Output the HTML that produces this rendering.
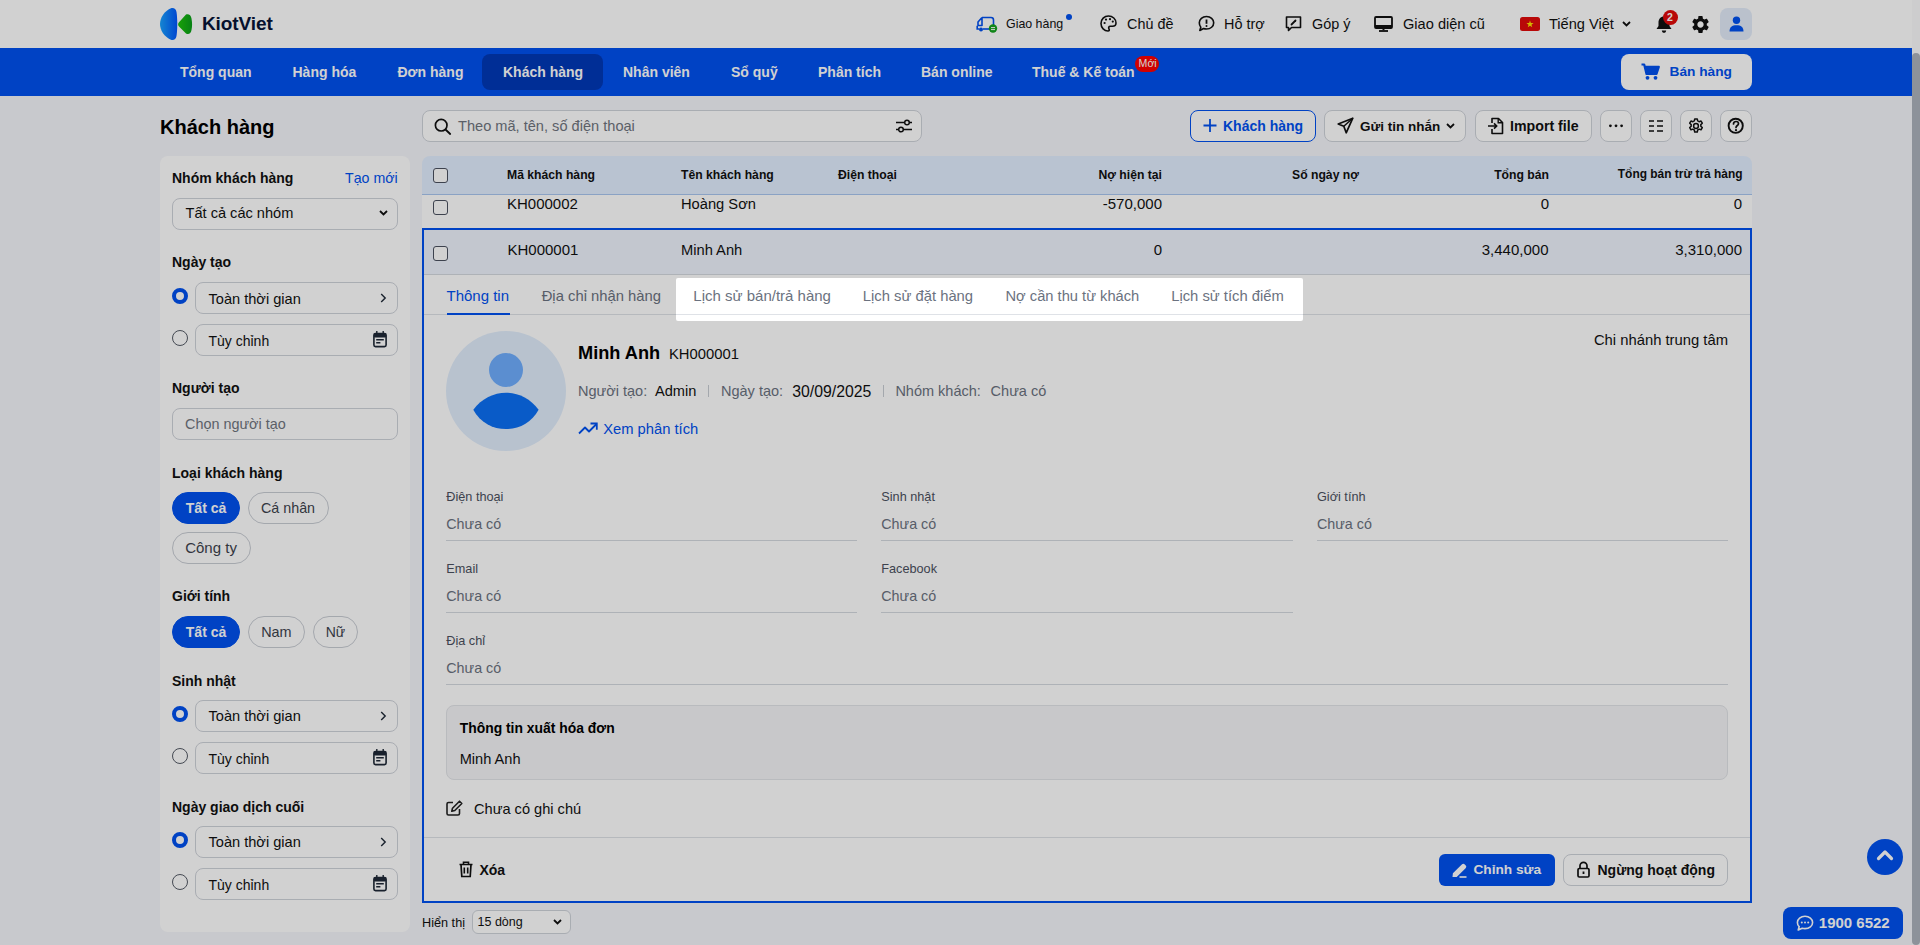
<!DOCTYPE html>
<html lang="vi">
<head>
<meta charset="utf-8">
<title>KiotViet - Khách hàng</title>
<style>
*{box-sizing:border-box;margin:0;padding:0}
html,body{width:1920px;height:945px;overflow:hidden}
body{font-family:"Liberation Sans",sans-serif;background:#f5f6fa;color:#111;position:relative}
.a{position:absolute}
.t{position:absolute;white-space:nowrap;line-height:1}
.b{font-weight:700}
svg{position:absolute;overflow:visible}
#hdr{left:0;top:0;width:1912px;height:48px;background:#fff}
#nav{left:0;top:48px;width:1912px;height:48px;background:#0051f0}
.nv{color:#fff;font-size:14px;font-weight:700;top:65px}
.box{position:absolute;background:#fff;border:1px solid #d4d7dd;border-radius:6px}
.btn{position:absolute;background:#fff;border:1px solid #cfd3da;border-radius:8px}
.lbl{font-size:14px;font-weight:700;color:#111}
.inp{position:absolute;left:195px;width:203px;height:32px;background:#fff;border:1px solid #cfd3da;border-radius:8px}
.radio{position:absolute;left:172px;width:16px;height:16px;border-radius:50%;border:1px solid #555b66;background:#fff}
.radio.on{border:4px solid #0051f0}
.pill{position:absolute;height:32px;border-radius:16px;border:1px solid #c9cdd4;background:#fff}
.pill.on{background:#0051f0;border-color:#0051f0}
.chk{width:15px;height:15px;border:1.5px solid #4b5160;border-radius:3px;background:#fff}
.th{top:169.1px;font-size:12.2px;font-weight:700;color:#111}
.td{font-size:15px;color:#111}
.tab{top:288.5px;color:#6b7280}
.mg{top:384.1px;font-size:14.5px;color:#6b7280}
.mv{top:384.1px;font-size:14.6px;color:#111}
.fl{font-size:12.7px;color:#4b5160}
.fv{font-size:14.3px;color:#6b7280}
.fline{height:1px;background:#d5d9e0}
</style>
</head>
<body>
<!-- HEADER -->
<div id="hdr" class="a">
  <svg style="left:160px;top:7px" width="34" height="34" viewBox="0 0 34 34">
    <defs>
      <linearGradient id="lg1" x1="0" y1="0" x2="1" y2="0"><stop offset="0" stop-color="#1aa3ff"/><stop offset="1" stop-color="#0057ff"/></linearGradient>
      <linearGradient id="lg2" x1="0" y1="0" x2="1" y2="0"><stop offset="0" stop-color="#1ec40a"/><stop offset="1" stop-color="#0a9e1a"/></linearGradient>
    </defs>
    <path d="M11.5 1 C14 0.5 16 2 16.5 5 C17.5 12 17.5 22 16.5 29 C16 32 14 33.5 11.5 33 C4 30 0 23 0 17 C0 11 4 4 11.5 1 Z" fill="url(#lg1)"/>
    <path d="M26 7.5 C28.5 6.5 31 8 31.5 11.5 C32.3 16 32.3 19 31.5 23 C31 26.5 28.5 28 26 26.5 L19 19.5 C17.8 18.3 17.8 16.5 19 15.3 Z" fill="url(#lg2)"/>
  </svg>
  <div class="t b" style="left:202px;top:14px;font-size:19px;color:#071437;letter-spacing:-0.1px">KiotViet</div>

  <!-- truck -->
  <svg style="left:976px;top:15px" width="22" height="18" viewBox="0 0 22 18">
    <path d="M6 2.5 h9 a2.5 2.5 0 0 1 2.5 2.5 v5" fill="none" stroke="#0051f0" stroke-width="1.6"/>
    <path d="M6 2.5 v8 h-4 v-3.5 l4 -4.5" fill="none" stroke="#0051f0" stroke-width="1.6" stroke-linejoin="round"/>
    <path d="M1.2 10.8 v3.2 h2" fill="none" stroke="#0051f0" stroke-width="1.6"/>
    <path d="M7 14 h6" fill="none" stroke="#0051f0" stroke-width="1.6"/>
    <circle cx="5" cy="14.5" r="2" fill="#0051f0"/>
    <circle cx="17" cy="13.5" r="4.2" fill="#14a31e"/>
    <path d="M15 12.6 h4 M15 14.6 h4" stroke="#fff" stroke-width="1"/>
  </svg>
  <div class="t" style="left:1006px;top:17.5px;font-size:12.4px;color:#111">Giao hàng</div>
  <div class="a" style="left:1066px;top:14px;width:6px;height:6px;border-radius:50%;background:#0051f0"></div>

  <!-- palette -->
  <svg style="left:1100px;top:15px" width="17" height="17" viewBox="0 0 17 17">
    <path d="M8.5 1 C4.3 1 1 4.3 1 8.5 C1 12.7 4.3 16 8 16 C9.3 16 9.6 15 9 14 C8.2 12.8 8.8 11.3 10.3 11.3 H12.5 C14.6 11.3 16 9.8 16 8 C16 4 12.6 1 8.5 1 Z" fill="none" stroke="#111" stroke-width="1.6"/>
    <circle cx="4.6" cy="8" r="1.1" fill="#111"/><circle cx="6" cy="4.6" r="1.1" fill="#111"/><circle cx="10" cy="4.2" r="1.1" fill="#111"/><circle cx="12.8" cy="6.6" r="1.1" fill="#111"/>
  </svg>
  <div class="t" style="left:1127px;top:16.7px;font-size:14.4px">Chủ đề</div>

  <!-- help bubble -->
  <svg style="left:1198px;top:15px" width="17" height="17" viewBox="0 0 17 17">
    <path d="M8.5 1.5 C12.6 1.5 15.7 4.2 15.7 7.8 C15.7 11.4 12.6 14 8.5 14 C7.5 14 6.5 13.9 5.6 13.5 L1.8 15.5 L2.8 12.2 C1.8 11 1.3 9.5 1.3 7.8 C1.3 4.2 4.4 1.5 8.5 1.5 Z" fill="none" stroke="#111" stroke-width="1.6" stroke-linejoin="round"/>
    <path d="M8.5 4.5 v4.3" stroke="#111" stroke-width="1.8"/><circle cx="8.5" cy="10.9" r="1" fill="#111"/>
  </svg>
  <div class="t" style="left:1224px;top:16.7px;font-size:14.4px">Hỗ trợ</div>

  <!-- feedback -->
  <svg style="left:1285px;top:16px" width="17" height="16" viewBox="0 0 17 16">
    <path d="M1.5 1 H15.5 V11.5 H6.5 L3.5 14.5 V11.5 H1.5 Z" fill="none" stroke="#111" stroke-width="1.6" stroke-linejoin="round"/>
    <path d="M6.5 8.5 L10.5 4.5" stroke="#111" stroke-width="1.8" stroke-linecap="round"/>
  </svg>
  <div class="t" style="left:1312px;top:16.7px;font-size:14.4px">Góp ý</div>

  <!-- monitor -->
  <svg style="left:1374px;top:16px" width="19" height="16" viewBox="0 0 19 16">
    <rect x="1" y="1" width="17" height="11" rx="1" fill="none" stroke="#111" stroke-width="1.8"/>
    <rect x="1" y="9" width="17" height="3" fill="#111"/>
    <path d="M9.5 12 v2" stroke="#111" stroke-width="2"/><path d="M5 15 h9" stroke="#111" stroke-width="1.8"/>
  </svg>
  <div class="t" style="left:1403px;top:16.7px;font-size:14.6px">Giao diện cũ</div>

  <!-- flag -->
  <div class="a" style="left:1520px;top:17px;width:20px;height:14px;border-radius:2.5px;background:#e10a0a"></div>
  <svg style="left:1526px;top:20px" width="8" height="8" viewBox="0 0 10 10"><path d="M5 0.5 L6.1 3.7 L9.5 3.7 L6.8 5.8 L7.8 9.2 L5 7.1 L2.2 9.2 L3.2 5.8 L0.5 3.7 L3.9 3.7 Z" fill="#ffe100"/></svg>
  <div class="t" style="left:1549px;top:16.7px;font-size:14.6px">Tiếng Việt</div>
  <svg style="left:1622px;top:21px" width="9" height="6" viewBox="0 0 9 6"><path d="M1 1 L4.5 4.5 L8 1" fill="none" stroke="#111" stroke-width="1.8"/></svg>

  <!-- bell -->
  <svg style="left:1655px;top:15px" width="18" height="19" viewBox="0 0 18 19">
    <path d="M9 1.5 C5.5 1.5 3.5 4.2 3.5 7.5 V11 L1.5 14 H16.5 L14.5 11 V7.5 C14.5 4.2 12.5 1.5 9 1.5 Z" fill="#111"/>
    <path d="M6.8 15.5 C7 17 7.8 17.8 9 17.8 C10.2 17.8 11 17 11.2 15.5 Z" fill="#111"/>
  </svg>
  <div class="a" style="left:1662.5px;top:9.5px;width:15px;height:15px;border-radius:50%;background:#e10a0a"></div>
  <div class="t b" style="left:1667px;top:12.3px;font-size:10.5px;color:#fff">2</div>

  <!-- gear -->
  <svg style="left:1689.6px;top:13.5px" width="21" height="21" viewBox="0 0 24 24">
    <path fill="#111" d="M19.14 12.94c.04-.3.06-.61.06-.94 0-.32-.02-.64-.07-.94l2.03-1.58a.49.49 0 0 0 .12-.61l-1.92-3.32a.488.488 0 0 0-.59-.22l-2.39.96c-.5-.38-1.03-.7-1.62-.94l-.36-2.54a.484.484 0 0 0-.48-.41h-3.84c-.24 0-.43.17-.47.41l-.36 2.54c-.59.24-1.13.57-1.62.94l-2.39-.96c-.22-.08-.47 0-.59.22L2.74 8.87c-.12.21-.08.47.12.61l2.03 1.58c-.05.3-.09.63-.09.94s.02.64.07.94l-2.03 1.58a.49.49 0 0 0-.12.61l1.92 3.32c.12.22.37.29.59.22l2.39-.96c.5.38 1.03.7 1.62.94l.36 2.54c.05.24.24.41.48.41h3.84c.24 0 .44-.17.47-.41l.36-2.54c.59-.24 1.13-.56 1.62-.94l2.39.96c.22.08.47 0 .59-.22l1.92-3.32c.12-.22.07-.47-.12-.61l-2.01-1.58zM12 15.6c-1.98 0-3.6-1.62-3.6-3.6s1.62-3.6 3.6-3.6 3.6 1.62 3.6 3.6-1.62 3.6-3.6 3.6z"/>
  </svg>

  <!-- avatar -->
  <div class="a" style="left:1720px;top:8px;width:32px;height:32px;border-radius:8px;background:#e3ecf9"></div>
  <svg style="left:1729px;top:16px" width="15" height="16" viewBox="0 0 15 16">
    <circle cx="7.5" cy="4.2" r="3.7" fill="#0051f0"/>
    <path d="M0.5 15.5 C0.5 11 3 9.2 7.5 9.2 C12 9.2 14.5 11 14.5 15.5 Z" fill="#0051f0"/>
  </svg>
</div>

<!-- NAV -->
<div id="nav" class="a"></div>
<div class="a" style="left:482px;top:54px;width:121px;height:36px;border-radius:8px;background:#0039b8"></div>
<div class="t nv" style="left:180px">Tổng quan</div>
<div class="t nv" style="left:292.5px">Hàng hóa</div>
<div class="t nv" style="left:397.5px">Đơn hàng</div>
<div class="t nv" style="left:503px">Khách hàng</div>
<div class="t nv" style="left:623px">Nhân viên</div>
<div class="t nv" style="left:731px">Sổ quỹ</div>
<div class="t nv" style="left:818px">Phân tích</div>
<div class="t nv" style="left:921px">Bán online</div>
<div class="t nv" style="left:1032px">Thuế &amp; Kế toán</div>
<div class="a" style="left:1135px;top:56px;width:24px;height:16px;border-radius:8px;background:#ff0000"></div>
<div class="t" style="left:1138.6px;top:57.9px;font-size:10.6px;color:#fff">Mới</div>

<div class="a" style="left:1621px;top:54px;width:131px;height:36px;border-radius:8px;background:#fff"></div>
<svg style="left:1641px;top:63px" width="19" height="17" viewBox="0 0 19 17">
  <path d="M0.5 1.5 H3.2 L5.5 11 H15.5 L17.8 3.8 H4.2" fill="none" stroke="#0051f0" stroke-width="2.2" stroke-linejoin="round"/>
  <path d="M4.3 4 H17.5 L15.6 10.5 H5.7 Z" fill="#0051f0"/>
  <circle cx="6.5" cy="14.8" r="1.9" fill="#0051f0"/><circle cx="14.5" cy="14.8" r="1.9" fill="#0051f0"/>
</svg>
<div class="t b" style="left:1669.5px;top:64.8px;font-size:13.7px;color:#0051f0">Bán hàng</div>

<!-- PAGE TITLE / TOOLBAR -->
<div class="t b" style="left:160px;top:116.5px;font-size:20px;color:#000">Khách hàng</div>

<!-- search -->
<div class="box" style="left:422px;top:110px;width:500px;height:32px;border-radius:8px;border-color:#cfd3da"></div>
<svg style="left:434px;top:118px" width="18" height="17" viewBox="0 0 18 17">
  <circle cx="7.2" cy="7.2" r="5.8" fill="none" stroke="#111" stroke-width="1.7"/>
  <path d="M11.5 11.5 L16.2 16" stroke="#111" stroke-width="1.8" stroke-linecap="round"/>
</svg>
<div class="t" style="left:458px;top:119px;font-size:14.6px;color:#70757e">Theo mã, tên, số điện thoại</div>
<svg style="left:895px;top:118px" width="18" height="16" viewBox="0 0 18 16">
  <path d="M1 4.5 H17 M1 11.5 H17" stroke="#111" stroke-width="1.5"/>
  <circle cx="12" cy="4.5" r="2.3" fill="#fff" stroke="#111" stroke-width="1.5"/>
  <circle cx="6" cy="11.5" r="2.3" fill="#fff" stroke="#111" stroke-width="1.5"/>
</svg>

<!-- action buttons -->
<div class="btn" style="left:1190px;top:110px;width:126px;height:32px;border-color:#0051f0"></div>
<svg style="left:1203px;top:118px" width="14" height="15" viewBox="0 0 14 15"><path d="M7 1 V14 M0.5 7.5 H13.5" stroke="#0051f0" stroke-width="1.8"/></svg>
<div class="t b" style="left:1223px;top:119.1px;font-size:14px;color:#0051f0">Khách hàng</div>

<div class="btn" style="left:1324px;top:110px;width:142px;height:32px"></div>
<svg style="left:1337px;top:117px" width="17" height="17" viewBox="0 0 17 17">
  <path d="M15.8 1.2 L1.2 7 L6.8 9.2 L9.2 15.8 Z" fill="none" stroke="#111" stroke-width="1.7" stroke-linejoin="round"/>
  <path d="M6.8 9.2 L15.8 1.2" stroke="#111" stroke-width="1.5"/>
</svg>
<div class="t b" style="left:1360px;top:120.1px;font-size:13.5px;color:#111">Gửi tin nhắn</div>
<svg style="left:1446px;top:123px" width="9" height="6" viewBox="0 0 9 6"><path d="M1 1 L4.5 4.5 L8 1" fill="none" stroke="#111" stroke-width="1.8"/></svg>

<div class="btn" style="left:1475px;top:110px;width:117px;height:32px"></div>
<svg style="left:1487px;top:117px" width="18" height="18" viewBox="0 0 18 18">
  <path d="M5 6 V1.5 H11.5 L15.5 5.5 V16.5 H5 V12" fill="none" stroke="#111" stroke-width="1.6" stroke-linejoin="round"/>
  <path d="M11.2 1.5 V5.8 H15.5" fill="none" stroke="#111" stroke-width="1.4"/>
  <path d="M1 9 H9.5 M7 6.3 L9.8 9 L7 11.7" fill="none" stroke="#111" stroke-width="1.6" stroke-linejoin="round"/>
</svg>
<div class="t b" style="left:1510px;top:119.1px;font-size:14.2px;color:#111">Import file</div>

<div class="btn" style="left:1600px;top:110px;width:32px;height:32px"></div>
<svg style="left:1608px;top:124px" width="16" height="4" viewBox="0 0 16 4"><circle cx="2.4" cy="1.8" r="1.4" fill="#111"/><circle cx="8" cy="1.8" r="1.4" fill="#111"/><circle cx="13.6" cy="1.8" r="1.4" fill="#111"/></svg>
<div class="btn" style="left:1640px;top:110px;width:32px;height:32px"></div>
<svg style="left:1648px;top:118px" width="16" height="16" viewBox="0 0 16 16"><path d="M1 3 H6 M9 3 H15 M1 8 H6 M9 8 H15 M1 13 H6 M9 13 H15" stroke="#111" stroke-width="1.7"/></svg>
<div class="btn" style="left:1680px;top:110px;width:32px;height:32px"></div>
<svg style="left:1687px;top:117px" width="18" height="18" viewBox="0 0 24 24">
  <path fill="none" stroke="#111" stroke-width="2" stroke-linejoin="round" d="M10.3 2.5h3.4l.5 2.6c.7.3 1.4.7 2 1.2l2.5-.9 1.7 2.9-2 1.8c.1.8.1 1.5 0 2.3l2 1.8-1.7 2.9-2.5-.9c-.6.5-1.3.9-2 1.2l-.5 2.6h-3.4l-.5-2.6c-.7-.3-1.4-.7-2-1.2l-2.5.9-1.7-2.9 2-1.8c-.1-.8-.1-1.5 0-2.3l-2-1.8 1.7-2.9 2.5.9c.6-.5 1.3-.9 2-1.2z"/>
  <circle cx="12" cy="12" r="3.2" fill="none" stroke="#111" stroke-width="2"/>
</svg>
<div class="btn" style="left:1720px;top:110px;width:32px;height:32px"></div>
<svg style="left:1727px;top:117px" width="18" height="18" viewBox="0 0 18 18">
  <circle cx="8.7" cy="8.8" r="7.1" fill="none" stroke="#111" stroke-width="1.9"/>
  <path d="M6.5 7 C6.5 5.4 7.6 4.5 9 4.5 C10.5 4.5 11.5 5.4 11.5 6.7 C11.5 8.4 9 8.6 9 10.5" fill="none" stroke="#111" stroke-width="1.7" stroke-linecap="round"/>
  <circle cx="9" cy="13.2" r="1.1" fill="#111"/>
</svg>

<!-- SIDEBAR -->
<div class="a" style="left:160px;top:156px;width:250px;height:776px;background:#fff;border-radius:8px"></div>
<div class="t lbl" style="left:172px;top:171.4px">Nhóm khách hàng</div>
<div class="t" style="left:345px;top:171.4px;font-size:14.2px;color:#0051f0">Tạo mới</div>
<div class="inp" style="left:172px;top:198px;width:226px"></div>
<div class="t" style="left:185.5px;top:205.8px;font-size:14.6px">Tất cả các nhóm</div>
<svg style="left:379px;top:210px" width="9" height="6" viewBox="0 0 9 6"><path d="M1 1 L4.5 4.5 L8 1" fill="none" stroke="#111" stroke-width="1.8"/></svg>

<div class="t lbl" style="left:172px;top:255.1px">Ngày tạo</div>
<div class="radio on" style="top:288px"></div>
<div class="inp" style="top:282px"></div>
<div class="t" style="left:208.5px;top:291.7px;font-size:14.6px">Toàn thời gian</div>
<svg style="left:380px;top:293px" width="7" height="10" viewBox="0 0 7 10"><path d="M1.2 1 L5.2 5 L1.2 9" fill="none" stroke="#1f2937" stroke-width="1.4"/></svg>
<div class="radio" style="top:330px"></div>
<div class="inp" style="top:324px"></div>
<div class="t" style="left:208.5px;top:333.8px;font-size:14px">Tùy chỉnh</div>
<svg class="cal" style="left:373px;top:331px" width="14" height="16" viewBox="0 0 14 16">
  <path d="M3.8 0 V2.6 M10.2 0 V2.6" stroke="#1f2937" stroke-width="1.4"/>
  <rect x="0.9" y="2.6" width="12.2" height="13" rx="1.6" fill="none" stroke="#1f2937" stroke-width="1.6"/>
  <rect x="0.9" y="2.6" width="12.2" height="3.8" rx="1" fill="#1f2937"/>
  <path d="M3.2 8.8 H10.8 M3.2 11.8 H7.4" stroke="#1f2937" stroke-width="1.4"/>
</svg>

<div class="t lbl" style="left:172px;top:381.1px">Người tạo</div>
<div class="inp" style="left:172px;top:408px;width:226px"></div>
<div class="t" style="left:185px;top:417.4px;font-size:14.4px;color:#70757e">Chọn người tạo</div>

<div class="t lbl" style="left:172px;top:465.5px">Loại khách hàng</div>
<div class="pill on" style="left:172px;top:492px;width:68px"></div>
<div class="t b" style="left:185.8px;top:500.8px;font-size:14px;color:#fff">Tất cả</div>
<div class="pill" style="left:248px;top:492px;width:81px"></div>
<div class="t" style="left:261px;top:500.6px;font-size:14.3px;color:#3d434d">Cá nhân</div>
<div class="pill" style="left:172px;top:532px;width:79px"></div>
<div class="t" style="left:185.2px;top:539.8px;font-size:15px;color:#3d434d">Công ty</div>

<div class="t lbl" style="left:172px;top:589.1px">Giới tính</div>
<div class="pill on" style="left:172px;top:616px;width:68px"></div>
<div class="t b" style="left:185.8px;top:625.3px;font-size:14px;color:#fff">Tất cả</div>
<div class="pill" style="left:248px;top:616px;width:57px"></div>
<div class="t" style="left:261.2px;top:625px;font-size:14.4px;color:#3d434d">Nam</div>
<div class="pill" style="left:313px;top:616px;width:45px"></div>
<div class="t" style="left:325.7px;top:625px;font-size:14px;color:#3d434d">Nữ</div>

<div class="t lbl" style="left:172px;top:673.5px">Sinh nhật</div>
<div class="radio on" style="top:706px"></div>
<div class="inp" style="top:700px"></div>
<div class="t" style="left:208.5px;top:709.4px;font-size:14.6px">Toàn thời gian</div>
<svg style="left:380px;top:711px" width="7" height="10" viewBox="0 0 7 10"><path d="M1.2 1 L5.2 5 L1.2 9" fill="none" stroke="#1f2937" stroke-width="1.4"/></svg>
<div class="radio" style="top:748px"></div>
<div class="inp" style="top:742px"></div>
<div class="t" style="left:208.5px;top:751.6px;font-size:14px">Tùy chỉnh</div>
<svg style="left:373px;top:749px" width="14" height="16" viewBox="0 0 14 16">
  <path d="M3.8 0 V2.6 M10.2 0 V2.6" stroke="#1f2937" stroke-width="1.4"/>
  <rect x="0.9" y="2.6" width="12.2" height="13" rx="1.6" fill="none" stroke="#1f2937" stroke-width="1.6"/>
  <rect x="0.9" y="2.6" width="12.2" height="3.8" rx="1" fill="#1f2937"/>
  <path d="M3.2 8.8 H10.8 M3.2 11.8 H7.4" stroke="#1f2937" stroke-width="1.4"/>
</svg>

<div class="t lbl" style="left:172px;top:799.8px">Ngày giao dịch cuối</div>
<div class="radio on" style="top:832px"></div>
<div class="inp" style="top:826px"></div>
<div class="t" style="left:208.5px;top:835.4px;font-size:14.6px">Toàn thời gian</div>
<svg style="left:380px;top:837px" width="7" height="10" viewBox="0 0 7 10"><path d="M1.2 1 L5.2 5 L1.2 9" fill="none" stroke="#1f2937" stroke-width="1.4"/></svg>
<div class="radio" style="top:874px"></div>
<div class="inp" style="top:868px"></div>
<div class="t" style="left:208.5px;top:877.9px;font-size:14px">Tùy chỉnh</div>
<svg style="left:373px;top:875px" width="14" height="16" viewBox="0 0 14 16">
  <path d="M3.8 0 V2.6 M10.2 0 V2.6" stroke="#1f2937" stroke-width="1.4"/>
  <rect x="0.9" y="2.6" width="12.2" height="13" rx="1.6" fill="none" stroke="#1f2937" stroke-width="1.6"/>
  <rect x="0.9" y="2.6" width="12.2" height="3.8" rx="1" fill="#1f2937"/>
  <path d="M3.2 8.8 H10.8 M3.2 11.8 H7.4" stroke="#1f2937" stroke-width="1.4"/>
</svg>

<!-- TABLE -->
<div class="a" style="left:422px;top:156px;width:1330px;height:39px;background:#e2eeff;border-radius:8px 8px 0 0;border-bottom:1px solid #a9c6ef"></div>
<div class="a" style="left:422px;top:195px;width:1330px;height:34px;background:#fff"></div>
<div class="a chk" style="left:433px;top:167.5px"></div>
<div class="t th" style="left:507px">Mã khách hàng</div>
<div class="t th" style="left:681px">Tên khách hàng</div>
<div class="t th" style="left:838px">Điện thoại</div>
<div class="t th r" style="right:758px">Nợ hiện tại</div>
<div class="t th" style="left:1292px">Số ngày nợ</div>
<div class="t th r" style="right:371px">Tổng bán</div>
<div class="t th r" style="right:177.5px;font-size:11.95px">Tổng bán trừ trả hàng</div>

<div class="a chk" style="left:433px;top:199.5px"></div>
<div class="t td" style="left:507px;top:195.6px">KH000002</div>
<div class="t td" style="left:681px;top:196.9px;font-size:14.7px">Hoàng Sơn</div>
<div class="t td" style="right:758px;top:195.6px">-570,000</div>
<div class="t td" style="right:371px;top:195.6px">0</div>
<div class="t td" style="right:178px;top:195.6px">0</div>

<!-- selected panel -->
<div class="a" style="left:422px;top:228px;width:1330px;height:675px;background:#fff;border:2px solid #0051f0"></div>
<div class="a" style="left:424px;top:230px;width:1326px;height:45px;background:#eef3fd;border-bottom:1px solid #d5d9e0"></div>
<div class="a chk" style="left:433px;top:245.5px"></div>
<div class="t td" style="left:507.5px;top:242px">KH000001</div>
<div class="t td" style="left:681px;top:242.6px;font-size:14.7px">Minh Anh</div>
<div class="t td" style="right:758px;top:242px">0</div>
<div class="t td" style="right:371.5px;top:242px">3,440,000</div>
<div class="t td" style="right:178px;top:242px">3,310,000</div>

<!-- tabs -->
<div class="a" style="left:424px;top:314px;width:1326px;height:1px;background:#dfe2e7"></div>
<div class="t" style="left:446.5px;top:288.3px;font-size:15px;color:#0051f0">Thông tin</div>
<div class="a" style="left:446.5px;top:313px;width:63.5px;height:2px;background:#0051f0"></div>
<div class="t tab" style="left:541.7px;font-size:14.8px">Địa chỉ nhận hàng</div>
<div class="t tab" style="left:693.3px;top:287.6px;font-size:15px">Lịch sử bán/trả hàng</div>
<div class="t tab" style="left:862.8px;font-size:14.8px">Lịch sử đặt hàng</div>
<div class="t tab" style="left:1005.5px;font-size:14.7px">Nợ cần thu từ khách</div>
<div class="t tab" style="left:1171.2px;font-size:14.8px">Lịch sử tích điểm</div>

<!-- detail info -->
<div class="a" style="left:446px;top:331px;width:120px;height:120px;border-radius:50%;background:#e1edfc"></div>
<div class="a" style="left:489px;top:353px;width:34px;height:34px;border-radius:50%;background:#6faefe"></div>
<svg style="left:0;top:0" width="1" height="1" viewBox="0 0 1 1">
  <path d="M473.3 409.7 C490 387 522 387 538.6 409.7 C525 435.5 487 435.5 473.3 409.7 Z" fill="#0c6ff4"/>
</svg>
<div class="t" style="right:192px;top:332.5px;font-size:14.8px;color:#111">Chi nhánh trung tâm</div>
<div class="t b" style="left:578px;top:344px;font-size:18.2px;color:#000">Minh Anh</div>
<div class="t" style="left:669px;top:346.8px;font-size:14.8px;color:#111">KH000001</div>

<div class="t mg" style="left:578px">Người tạo:</div>
<div class="t mv" style="left:655px">Admin</div>
<div class="a" style="left:708px;top:385px;width:1px;height:12px;background:#c9cdd4"></div>
<div class="t mg" style="left:721px">Ngày tạo:</div>
<div class="t mv" style="left:792.3px;font-size:15.8px;top:383.5px">30/09/2025</div>
<div class="a" style="left:883px;top:385px;width:1px;height:12px;background:#c9cdd4"></div>
<div class="t mg" style="left:895.4px">Nhóm khách:</div>
<div class="t mg" style="left:990.6px">Chưa có</div>

<svg style="left:578px;top:422px" width="20" height="13" viewBox="0 0 20 13">
  <path d="M1 11.5 L7 5.5 L11 9.5 L18.5 2" fill="none" stroke="#0051f0" stroke-width="1.8" stroke-linejoin="round"/>
  <path d="M12.5 1.5 H18.8 V7.8" fill="none" stroke="#0051f0" stroke-width="1.8"/>
</svg>
<div class="t" style="left:603.2px;top:421.9px;font-size:14.75px;color:#0051f0">Xem phân tích</div>

<!-- fields -->
<div class="t fl" style="left:446.3px;top:490.9px">Điện thoại</div>
<div class="t fv" style="left:446.3px;top:517.2px">Chưa có</div>
<div class="a fline" style="left:446px;top:540px;width:411px"></div>
<div class="t fl" style="left:881.3px;top:490.9px">Sinh nhật</div>
<div class="t fv" style="left:881.3px;top:517.2px">Chưa có</div>
<div class="a fline" style="left:881px;top:540px;width:412px"></div>
<div class="t fl" style="left:1317px;top:490.9px">Giới tính</div>
<div class="t fv" style="left:1317px;top:517.2px">Chưa có</div>
<div class="a fline" style="left:1317px;top:540px;width:411px"></div>

<div class="t fl" style="left:446.3px;top:562.5px">Email</div>
<div class="t fv" style="left:446.3px;top:589px">Chưa có</div>
<div class="a fline" style="left:446px;top:612px;width:411px"></div>
<div class="t fl" style="left:881.3px;top:562.5px">Facebook</div>
<div class="t fv" style="left:881.3px;top:589px">Chưa có</div>
<div class="a fline" style="left:881px;top:612px;width:412px"></div>

<div class="t fl" style="left:446.3px;top:634.9px">Địa chỉ</div>
<div class="t fv" style="left:446.3px;top:661.2px">Chưa có</div>
<div class="a fline" style="left:446px;top:684px;width:1282px"></div>

<!-- invoice -->
<div class="a" style="left:446px;top:705px;width:1282px;height:75px;background:#f4f5f7;border:1px solid #e2e4e8;border-radius:8px"></div>
<div class="t b" style="left:459.7px;top:722.1px;font-size:13.9px;color:#000">Thông tin xuất hóa đơn</div>
<div class="t" style="left:459.7px;top:751.9px;font-size:14.6px;color:#111">Minh Anh</div>

<svg style="left:446px;top:800px" width="17" height="16" viewBox="0 0 17 16">
  <path d="M7 2.5 H2.5 A1.5 1.5 0 0 0 1 4 V13.5 A1.5 1.5 0 0 0 2.5 15 H12 A1.5 1.5 0 0 0 13.5 13.5 V9" fill="none" stroke="#222" stroke-width="1.6"/>
  <path d="M13.5 1.2 L15.8 3.5 L8.8 10.5 L5.8 11.2 L6.5 8.2 Z" fill="none" stroke="#222" stroke-width="1.6" stroke-linejoin="round"/>
</svg>
<div class="t" style="left:474px;top:801.8px;font-size:14.6px;color:#111">Chưa có ghi chú</div>

<div class="a" style="left:424px;top:837px;width:1326px;height:1px;background:#dfe2e7"></div>
<svg style="left:459px;top:861px" width="14" height="17" viewBox="0 0 14 17">
  <path d="M0.5 3.5 H13.5 M4.5 3.5 V1.2 H9.5 V3.5" fill="none" stroke="#111" stroke-width="1.6"/>
  <path d="M2 3.5 L2.8 15.5 H11.2 L12 3.5" fill="none" stroke="#111" stroke-width="1.7"/>
  <path d="M5.3 6.5 V12.5 M8.7 6.5 V12.5" stroke="#111" stroke-width="1.6"/>
</svg>
<div class="t b" style="left:479.4px;top:862.9px;font-size:14px;color:#111">Xóa</div>

<div class="a" style="left:1439px;top:854px;width:116px;height:32px;border-radius:6px;background:#0051f0"></div>
<svg style="left:1452px;top:862px" width="16" height="16" viewBox="0 0 16 16">
  <path d="M0.5 15 L0.9 11.3 L9.8 2.4 A2.1 2.1 0 0 1 12.8 2.4 L13.6 3.2 A2.1 2.1 0 0 1 13.6 6.2 L4.7 15 Z" fill="#fff"/>
  <path d="M7.5 15 H14.5" stroke="#fff" stroke-width="1.6"/>
</svg>
<div class="t b" style="left:1473.4px;top:863px;font-size:13.7px;color:#fff">Chỉnh sửa</div>
<div class="btn" style="left:1563px;top:854px;width:165px;height:32px"></div>
<svg style="left:1577px;top:861px" width="13" height="17" viewBox="0 0 13 17">
  <path d="M3 7.5 V4.8 A3.5 3.5 0 0 1 10 4.8 V7.5" fill="none" stroke="#111" stroke-width="1.7"/>
  <rect x="1" y="7.5" width="11" height="8.5" rx="1.3" fill="none" stroke="#111" stroke-width="1.7"/>
  <path d="M6.5 10.5 V13" stroke="#111" stroke-width="1.8"/>
</svg>
<div class="t b" style="left:1597.5px;top:863px;font-size:14px;color:#111">Ngừng hoạt động</div>

<!-- footer -->
<div class="t" style="left:422px;top:916.5px;font-size:12.7px;color:#111">Hiển thị</div>
<div class="box" style="left:472px;top:910px;width:99px;height:24px;border-radius:6px;border-color:#cfd3da"></div>
<div class="t" style="left:477.5px;top:915.5px;font-size:12.5px;color:#111">15 dòng</div>
<svg style="left:553px;top:919px" width="9" height="6" viewBox="0 0 9 6"><path d="M1 1 L4.5 4.5 L8 1" fill="none" stroke="#111" stroke-width="1.8"/></svg>

<div class="a" style="left:1867px;top:839px;width:36px;height:36px;border-radius:50%;background:#0051f0"></div>
<svg style="left:1876px;top:849px" width="18" height="12" viewBox="0 0 18 12"><path d="M2.5 9.5 L9 3 L15.5 9.5" fill="none" stroke="#fff" stroke-width="3.2" stroke-linecap="round" stroke-linejoin="round"/></svg>
<div class="a" style="left:1783px;top:907px;width:120px;height:32px;border-radius:8px;background:#0051f0"></div>
<svg style="left:1796px;top:915px" width="18" height="16" viewBox="0 0 18 16">
  <path d="M9 1.2 C13.3 1.2 16.6 4 16.6 7.4 C16.6 10.8 13.3 13.6 9 13.6 C8 13.6 7.1 13.5 6.2 13.2 L2.2 15 L3.2 11.6 C2 10.5 1.4 9 1.4 7.4 C1.4 4 4.7 1.2 9 1.2 Z" fill="none" stroke="#fff" stroke-width="1.6" stroke-linejoin="round"/>
  <circle cx="5.8" cy="7.4" r="1" fill="#fff"/><circle cx="9" cy="7.4" r="1" fill="#fff"/><circle cx="12.2" cy="7.4" r="1" fill="#fff"/>
</svg>
<div class="t b" style="left:1818.8px;top:914.8px;font-size:15px;color:#fff">1900 6522</div>

<!-- scrollbar -->
<div class="a" style="left:1912px;top:0;width:8px;height:945px;background:#fbfbfc"></div>
<div class="a" style="left:1912px;top:53px;width:8px;height:892px;background:#adb3bc;border-radius:4px"></div>

<!-- OVERLAY -->
<div class="a" style="left:676px;top:278px;width:627px;height:43px;border-radius:2px;box-shadow:0 0 2px 4000px rgba(0,0,0,0.18);z-index:50"></div>
<!--END-->
</body>
</html>
